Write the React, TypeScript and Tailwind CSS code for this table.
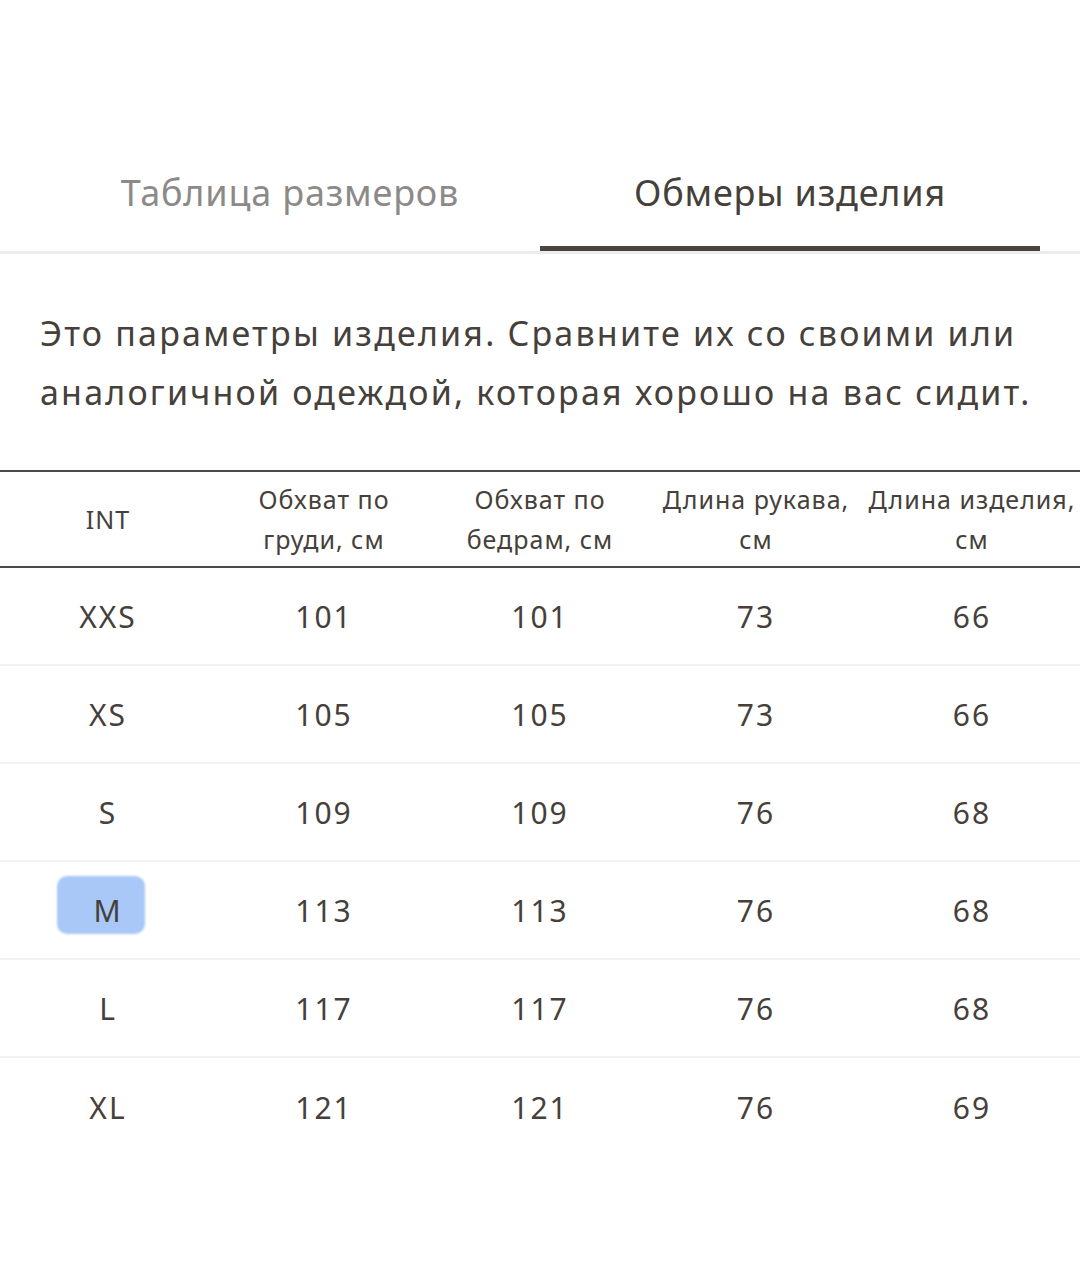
const rows = [
  ["XXS", "101", "101", "73", "66"],
  ["XS", "105", "105", "73", "66"],
  ["S", "109", "109", "76", "68"],
  ["M", "113", "113", "76", "68"],
  ["L", "117", "117", "76", "68"],
  ["XL", "121", "121", "76", "69"],
];

const headers = [
  ["INT"],
  ["Обхват по", "груди, см"],
  ["Обхват по", "бедрам, см"],
  ["Длина рукава,", "см"],
  ["Длина изделия,", "см"],
];

export default function App() {
  return (
    <div
      className="w-[1080px] h-[1280px] bg-white text-[#46403b] overflow-hidden"
      style={{ fontFamily: '"Noto Sans", sans-serif' }}
    >
      {/* tabs */}
      <div className="pt-[164px] border-b-[3px] border-[#ececec]">
        <div className="flex pl-[40px]">
          <div className="w-[500px] h-[87px] flex justify-center pt-[2px] text-[36px] tracking-[0.8px] text-[#8c8a88]">
            Таблица размеров
          </div>
          <div className="w-[500px] h-[87px] flex justify-center pt-[2px] text-[36px] tracking-[0.8px] border-b-[5px] border-[#4a433e]">
            Обмеры изделия
          </div>
        </div>
      </div>

      <p className="px-[40px] pt-[50px] text-[34px] leading-[59px] tracking-[2.2px] whitespace-nowrap">
        Это параметры изделия. Сравните их со своими или
        <br />
        аналогичной одеждой, которая хорошо на вас сидит.
      </p>

      {/* table */}
      <div className="mt-[48px]">
        <div className="grid grid-cols-5 h-[98px] border-y-2 border-[#4f4a46] items-center">
          {headers.map((h, i) => (
            <div key={i} className="text-center text-[25px] leading-[40px] tracking-[1px] whitespace-nowrap">
              {h.map((l) => (
                <div key={l}>{l}</div>
              ))}
            </div>
          ))}
        </div>
        {rows.map((r, ri) => (
          <div
            key={ri}
            className={
              "grid grid-cols-5 h-[98px] items-center " +
              (ri < rows.length - 1 ? "border-b-2 border-[#f1f1f1]" : "")
            }
          >
            {r.map((c, ci) => (
              <div key={ci} className="flex justify-center text-[30px] tracking-[2px]">
                {ri === 3 && ci === 0 ? (
                  <span className="relative inline-block">
                    <span className="absolute left-1/2 top-1/2 -ml-[51px] -mt-[34px] w-[88px] h-[58px] rounded-[10px] bg-[#a9c8f7] blur-[1px]" />
                    <span className="relative">{c}</span>
                  </span>
                ) : (
                  c
                )}
              </div>
            ))}
          </div>
        ))}
      </div>
    </div>
  );
}
